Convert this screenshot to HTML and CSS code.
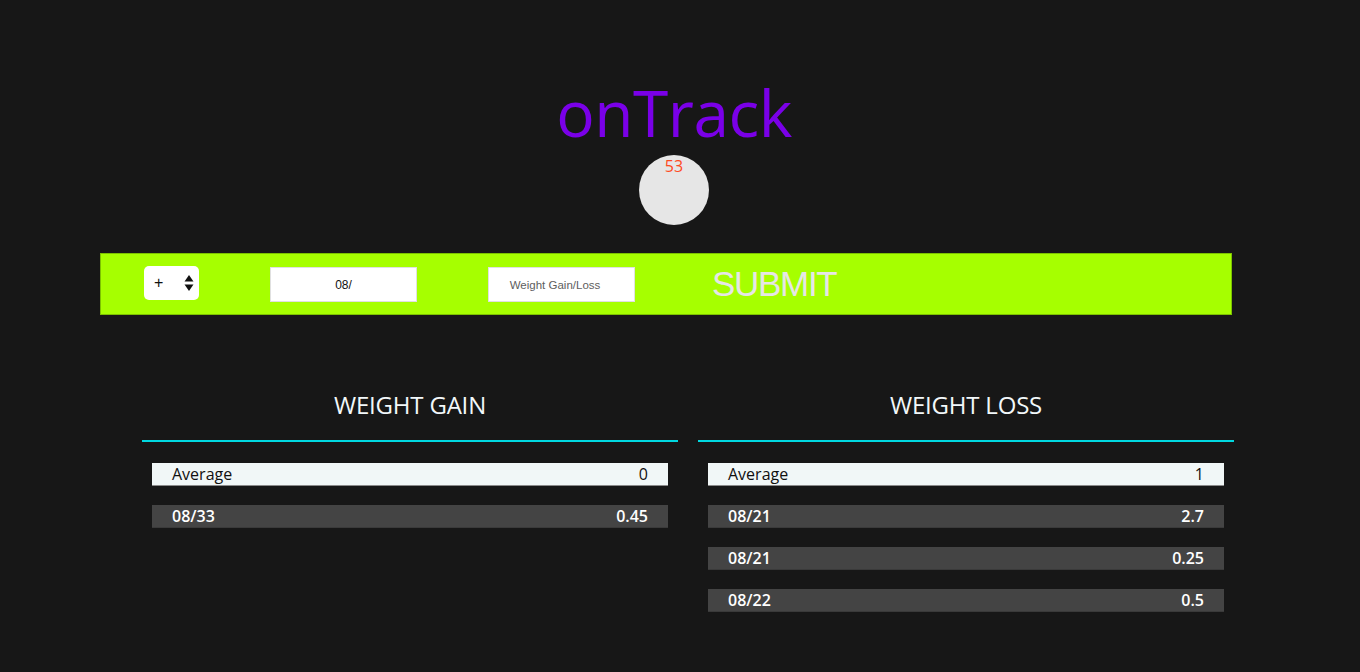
FILE: index.html
```html
<!DOCTYPE html>
<html lang="en">
<head>
<meta charset="utf-8">
<title>onTrack</title>
<link rel="stylesheet" href="styles.css">
</head>
<body>
  <header class="header">
    <h1 class="title">onTrack</h1>
    <div class="counter"><span class="counter-num">53</span></div>
  </header>

  <form class="entry-bar">
    <div class="select">
      <span class="select-value">+</span>
      <svg class="select-arrows" width="10" height="18" viewBox="0 0 10 18">
        <polygon points="5,1 9.5,7.5 0.5,7.5" fill="#111"/>
        <polygon points="0.5,10.5 9.5,10.5 5,17" fill="#111"/>
      </svg>
    </div>
    <input class="field field-date" type="text" value="08/">
    <input class="field field-weight" type="text" placeholder="Weight Gain/Loss">
    <button class="submit" type="button">SUBMIT</button>
  </form>

  <main class="columns">
    <section class="column">
      <h2 class="column-title">WEIGHT GAIN</h2>
      <div class="rule"></div>
      <div class="rows">
        <div class="row row-avg"><span>Average</span><span>0</span></div>
        <div class="row row-item"><span>08/33</span><span>0.45</span></div>
      </div>
    </section>
    <section class="column">
      <h2 class="column-title">WEIGHT LOSS</h2>
      <div class="rule"></div>
      <div class="rows">
        <div class="row row-avg"><span>Average</span><span>1</span></div>
        <div class="row row-item"><span>08/21</span><span>2.7</span></div>
        <div class="row row-item"><span>08/21</span><span>0.25</span></div>
        <div class="row row-item"><span>08/22</span><span>0.5</span></div>
      </div>
    </section>
  </main>
</body>
</html>
```

FILE: styles.css
```css
* { box-sizing: border-box; }

html, body {
  margin: 0;
  padding: 0;
  background: #171717;
  font-family: "Open Sans", "Liberation Sans", sans-serif;
}

body {
  height: 672px;
  overflow: hidden;
}

.header {
  display: flex;
  flex-direction: column;
  align-items: center;
  padding-top: 70px;
  padding-right: 12px;
}

.title {
  margin: 0;
  font-size: 64px;
  font-weight: 500;
  line-height: 85px;
  letter-spacing: -0.5px;
  color: #7a00e8;
}

.counter {
  width: 70px;
  height: 70px;
  border-radius: 50%;
  background: #e6e6e6;
  display: flex;
  justify-content: center;
}

.counter-num {
  font-size: 16px;
  line-height: 22px;
  color: #ff4a22;
}

.entry-bar {
  margin: 28px 0 0 100px;
  width: 1132px;
  height: 62px;
  background: #a6ff00;
  border: 1px solid #7cc200;
  display: flex;
  align-items: center;
  padding-left: 43px;
  gap: 71px;
  font-family: "Liberation Sans", Arial, sans-serif;
}

.select {
  width: 55px;
  height: 34px;
  margin-top: -2px;
  background: #fff;
  border-radius: 5px;
  display: flex;
  align-items: center;
  justify-content: space-between;
  padding: 0 5px 0 10px;
}

.select-value {
  font-size: 16px;
  color: #111;
}

.select-arrows {
  display: block;
}

.field {
  width: 147px;
  height: 35px;
  margin-top: 1px;
  border: 1px solid #e0e0e0;
  background: #fff;
  text-align: center;
  font-family: "Liberation Sans", Arial, sans-serif;
  font-size: 12px;
  color: #111;
  padding: 0;
  outline: none;
}

.field-weight {
  padding-right: 13px;
}

.field::placeholder {
  color: #5e5e5e;
  font-size: 11.5px;
}

.submit {
  margin-left: 6px;
  background: none;
  border: none;
  padding: 0;
  font-family: "Liberation Sans", Arial, sans-serif;
  font-size: 35px;
  letter-spacing: -1.3px;
  color: #e6e6e6;
  line-height: 40px;
}

.columns {
  display: flex;
  gap: 20px;
  margin-top: 73px;
  padding-left: 142px;
}

.column {
  width: 536px;
}

.column-title {
  margin: 0;
  text-align: center;
  font-size: 24px;
  font-weight: 500;
  line-height: 33px;
  color: #f2f8fa;
  letter-spacing: -0.2px;
}

.rule {
  margin-top: 19px;
  height: 2px;
  background: #00d8e0;
}

.rows {
  padding: 21px 10px 0;
  display: flex;
  flex-direction: column;
  gap: 19px;
}

.row {
  height: 23px;
  display: flex;
  justify-content: space-between;
  align-items: center;
  padding: 0 20px;
  font-size: 16px;
  line-height: 22px;
}

.row-avg {
  background: #f1f7f7;
  color: #111;
  border-bottom: 1px solid #8a8a8a;
}

.row-item {
  background: #444;
  color: #fff;
  font-weight: 600;
  border-bottom: 1px solid #3a3a3a;
}
```
